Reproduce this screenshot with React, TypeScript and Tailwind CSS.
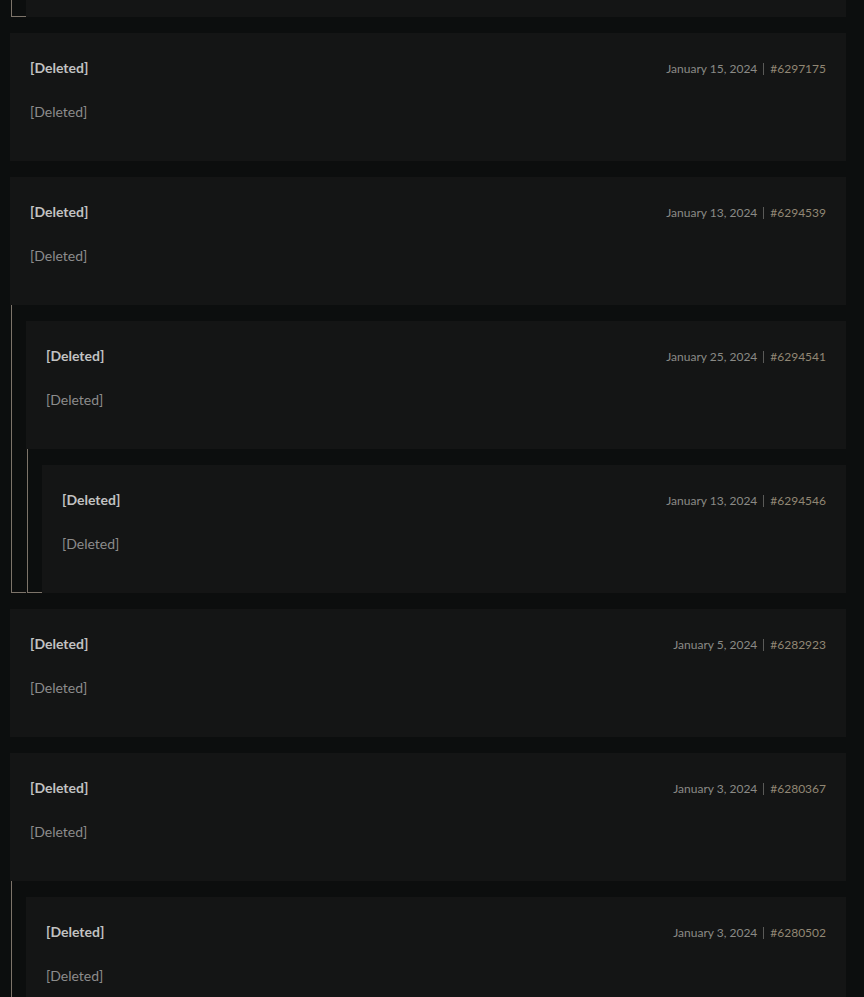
import React from "react";

type Post = { date: string; id: string; replies?: Post[] };

const posts: Post[] = [
  { date: "January 15, 2024", id: "#6297175" },
  {
    date: "January 13, 2024",
    id: "#6294539",
    replies: [
      {
        date: "January 25, 2024",
        id: "#6294541",
        replies: [{ date: "January 13, 2024", id: "#6294546" }],
      },
    ],
  },
  { date: "January 5, 2024", id: "#6282923" },
  {
    date: "January 3, 2024",
    id: "#6280367",
    replies: [{ date: "January 3, 2024", id: "#6280502" }],
  },
];

function Card({ p }: { p: Post }) {
  return (
    <div className="h-[128px] bg-[#141515] px-5 pt-5">
      <div className="flex h-[30px] items-center justify-between">
        <span className="pb-[2px] text-[14px] font-bold text-[#c2c2c2]">[Deleted]</span>
        <span className="flex items-center pt-[2px] text-[12px] text-[#8a8a86]">
          <span>{p.date}</span>
          <span className="mx-[6px] h-[12px] w-px bg-[#5a5a58]" />
          <span className="text-[#918774]">{p.id}</span>
        </span>
      </div>
      <div className="mt-[20px] text-[14px] leading-[18px] text-[#8c8c8c]">[Deleted]</div>
    </div>
  );
}

function Thread({ p }: { p: Post }) {
  return (
    <div>
      <Card p={p} />
      {p.replies && (
        <div className="flex">
          <div className="ml-px w-[15px] shrink-0 border-b border-l border-[#7d746a]" />
          <div className="flex min-w-0 flex-1 flex-col gap-4 pt-4">
            {p.replies.map((r) => (
              <Thread key={r.id} p={r} />
            ))}
          </div>
        </div>
      )}
    </div>
  );
}

export default function App() {
  return (
    <div
      className="min-h-[997px] overflow-hidden bg-[#0c0e0e] pl-[10px] pr-[18px]"
      style={{ fontFamily: "Lato, 'Noto Sans', sans-serif" }}
    >
      <div className="flex h-[17px]">
        <div className="ml-px w-[15px] shrink-0 border-b border-l border-[#7d746a]" />
        <div className="flex-1 bg-[#141515]" />
      </div>
      <div className="mt-4 flex flex-col gap-4">
        {posts.map((p) => (
          <Thread key={p.id} p={p} />
        ))}
      </div>
    </div>
  );
}
